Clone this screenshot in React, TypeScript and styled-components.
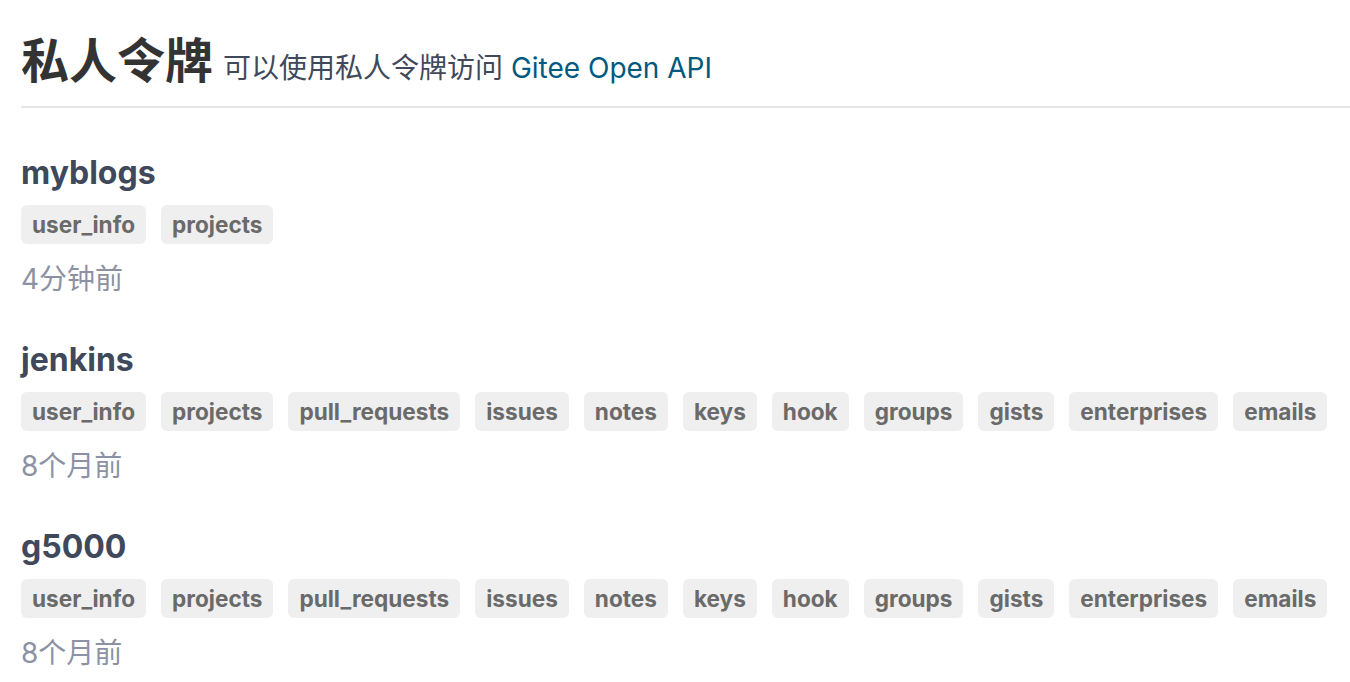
import React from "react";
import styled, { createGlobalStyle } from "styled-components";

const GlobalStyle = createGlobalStyle`
  html, body { margin: 0; padding: 0; background: #ffffff; }
  body { font-family: Inter, "Noto Sans CJK SC", sans-serif; }
`;

const Page = styled.div`
  padding: 0 0 0 21px;
`;

const Header = styled.header`
  display: flex;
  align-items: baseline;
  gap: 10px;
  padding-top: 29px;
  padding-bottom: 13px;
  border-bottom: 2px solid #e5e5e5;
`;

const Title = styled.h1`
  margin: 0;
  font-size: 48px;
  line-height: 64px;
  font-weight: 700;
  color: #333333;
`;

const Subtitle = styled.span`
  font-size: 28px;
  color: #40485b;
`;

const Link = styled.a`
  color: #005980;
  text-decoration: none;
`;

const List = styled.div`
  display: flex;
  flex-direction: column;
  padding-top: 45px;
`;

const Token = styled.section`
  display: flex;
  flex-direction: column;
  margin-bottom: 43px;
`;

const Name = styled.h3`
  margin: 0;
  font-size: 32px;
  line-height: 40px;
  font-weight: 700;
  color: #40485b;
`;

const Scopes = styled.div`
  display: flex;
  flex-wrap: wrap;
  gap: 15px;
  margin-top: 12px;
`;

const Scope = styled.span`
  display: inline-flex;
  align-items: center;
  height: 39px;
  padding: 0 11px;
  border-radius: 6px;
  background: #efefef;
  color: #6a6a6a;
  font-size: 22.6px;
  font-weight: 700;
`;

const Time = styled.div`
  margin-top: 17px;
  font-size: 28px;
  line-height: 36px;
  color: #8c92a4;
`;

const allScopes = [
  "user_info",
  "projects",
  "pull_requests",
  "issues",
  "notes",
  "keys",
  "hook",
  "groups",
  "gists",
  "enterprises",
  "emails",
];

const tokens = [
  { name: "myblogs", scopes: ["user_info", "projects"], time: "4分钟前" },
  { name: "jenkins", scopes: allScopes, time: "8个月前" },
  { name: "g5000", scopes: allScopes, time: "8个月前" },
];

export default function App() {
  return (
    <Page>
      <GlobalStyle />
      <Header>
        <Title>私人令牌</Title>
        <Subtitle>
          可以使用私人令牌访问 <Link href="#">Gitee Open API</Link>
        </Subtitle>
      </Header>
      <List>
        {tokens.map((t) => (
          <Token key={t.name}>
            <Name>{t.name}</Name>
            <Scopes>
              {t.scopes.map((s) => (
                <Scope key={s}>{s}</Scope>
              ))}
            </Scopes>
            <Time>{t.time}</Time>
          </Token>
        ))}
      </List>
    </Page>
  );
}
